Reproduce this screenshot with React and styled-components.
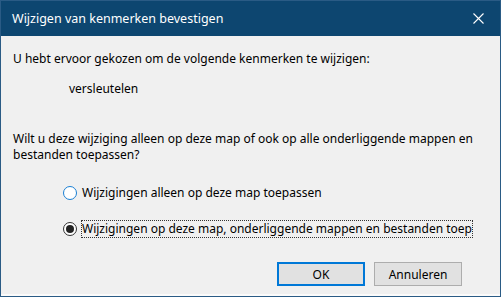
import React from "react";
import styled, { createGlobalStyle } from "styled-components";

const GlobalStyle = createGlobalStyle`
  html, body {
    margin: 0;
    padding: 0;
    background: #ffffff;
  }
`;

const Window = styled.div`
  width: 501px;
  height: 297px;
  box-sizing: border-box;
  border: 1px solid #2a5b85;
  background: #f0f0f0;
  display: flex;
  flex-direction: column;
  font-family: "Segoe UI", "Noto Sans", "Open Sans", sans-serif;
  font-size: 12px;
  color: #000;
`;

const TitleBar = styled.div`
  height: 35px;
  background: #0d4670;
  color: #fff;
  display: flex;
  align-items: center;
  justify-content: space-between;
  padding: 0 16px 0 11px;
  font-size: 12.5px;
`;

const CloseIcon = styled.svg`
  width: 11px;
  height: 11px;
`;

const Body = styled.div`
  flex: 1;
  display: flex;
  flex-direction: column;
  padding: 15px 12px 0 12px;
  border-bottom: 2px solid #fbfbfb;
`;

const Line = styled.p`
  margin: 0;
  line-height: 16px;
  padding-left: ${({ $indent }) => $indent || 0}px;
  margin-top: ${({ $gap }) => $gap || 0}px;
`;

const Options = styled.div`
  display: flex;
  flex-direction: column;
  gap: 20px;
  margin-top: 22px;
  padding-left: 50px;
`;

const Option = styled.label`
  display: flex;
  align-items: center;
  gap: 5px;
  white-space: nowrap;
  line-height: 16px;
`;

const Radio = styled.span`
  width: 12px;
  height: 12px;
  border-radius: 50%;
  border: 1px solid ${({ $checked }) => ($checked ? "#333" : "#1a7fd4")};
  background: #fff;
  display: flex;
  align-items: center;
  justify-content: center;
  flex: none;
  &::after {
    content: "";
    width: 8px;
    height: 8px;
    border-radius: 50%;
    background: ${({ $checked }) => ($checked ? "#222" : "transparent")};
  }
`;

const OptionText = styled.span`
  outline: ${({ $focus }) => ($focus ? "1px dotted #333" : "none")};
  outline-offset: 0;
`;

const Footer = styled.div`
  margin-top: auto;
  display: flex;
  justify-content: flex-end;
  gap: 9px;
  padding: 0 26px 8px 0;
`;

const Button = styled.button`
  width: 88px;
  height: 24px;
  box-sizing: border-box;
  background: #e1e1e1;
  border: ${({ $primary }) => ($primary ? "2px solid #0078d7" : "1px solid #adadad")};
  font-family: inherit;
  font-size: 12px;
  color: #000;
  padding: 0;
`;

export default function App() {
  return (
    <>
      <GlobalStyle />
      <Window>
        <TitleBar>
          <span>Wijzigen van kenmerken bevestigen</span>
          <CloseIcon viewBox="0 0 11 11">
            <path d="M0.5 0.5 L10.5 10.5 M10.5 0.5 L0.5 10.5" stroke="#fff" strokeWidth="1.1" />
          </CloseIcon>
        </TitleBar>
        <Body>
          <Line>U hebt ervoor gekozen om de volgende kenmerken te wijzigen:</Line>
          <Line $indent={56} $gap={14}>versleutelen</Line>
          <Line $gap={34}>
            Wilt u deze wijziging alleen op deze map of ook op alle onderliggende mappen en
            <br />
            bestanden toepassen?
          </Line>
          <Options>
            <Option>
              <Radio />
              <OptionText>Wijzigingen alleen op deze map toepassen</OptionText>
            </Option>
            <Option>
              <Radio $checked />
              <OptionText $focus>Wijzigingen op deze map, onderliggende mappen en bestanden toep</OptionText>
            </Option>
          </Options>
          <Footer>
            <Button $primary>OK</Button>
            <Button>Annuleren</Button>
          </Footer>
        </Body>
      </Window>
    </>
  );
}
